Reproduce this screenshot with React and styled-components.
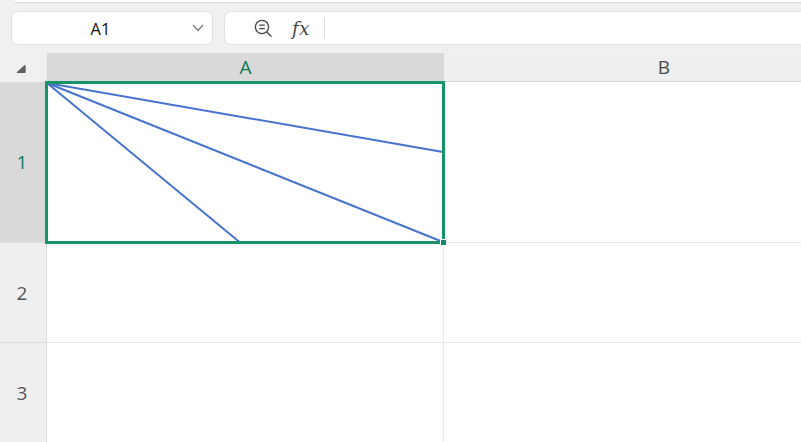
import React from 'react'
import styled, { createGlobalStyle } from 'styled-components'

const Global = createGlobalStyle`
  html, body { margin: 0; padding: 0; background: #eff1ef; overflow: hidden; }
  body { font-family: "Open Sans", "Noto Sans", sans-serif; }
`

const Page = styled.div`
  width: 801px;
  height: 442px;
  display: flex;
  flex-direction: column;
  overflow: hidden;
`

const TopSheet = styled.div`
  height: 2px;
  margin-left: 14px;
  background: #fff;
  border-bottom: 1px solid #d6d8d6;
  border-bottom-left-radius: 4px;
  flex: none;
`

const FormulaBar = styled.div`
  display: flex;
  gap: 11px;
  height: 34px;
  margin: 8px 0 8px 11px;
  flex: none;
`

const Box = styled.div`
  background: #fff;
  border: 1px solid #dfe1df;
  box-sizing: border-box;
  border-radius: 7px;
  display: flex;
  align-items: center;
`

const NameBox = styled(Box)`
  width: 202px;
  position: relative;
  justify-content: center;
  padding-right: 23px;
  font-size: 16.5px;
  color: #111;
`

const Chevron = styled.svg`
  position: absolute;
  right: 7px;
  top: 11px;
`

const InputBox = styled(Box)`
  flex: 1;
  border-right: none;
  border-top-right-radius: 0;
  border-bottom-right-radius: 0;
  padding-left: 29px;
`

const Fx = styled.span`
  font-family: "DejaVu Serif", "Liberation Serif", serif;
  font-style: italic;
  font-size: 18px;
  color: #444;
  margin-left: 19px;
  width: 25px;
  letter-spacing: 0.5px;
`

const Divider = styled.div`
  width: 1px;
  height: 20px;
  background: #dcdcdc;
  margin-left: 7px;
`

const Sheet = styled.div`
  position: relative;
  flex: 1;
  display: grid;
  grid-template-columns: 47px 397px 440px;
  grid-template-rows: 29px 161px 100px 100px;
  background: #fff;
`

const Corner = styled.div`
  background: #eff0ef;
  display: flex;
  align-items: center;
  justify-content: center;
  padding: 2px 5px 0 0;
`

const ColHead = styled.div`
  display: flex;
  align-items: center;
  justify-content: center;
  font-size: 19px;
  background: ${p => (p.$active ? '#d9d9d9' : '#efefef')};
  color: ${p => (p.$active ? '#0f7b5a' : '#4a4a4a')};
  border-bottom: 1px solid ${p => (p.$active ? '#d9d9d9' : '#d6d6d6')};
  box-sizing: border-box;
`

const RowHead = styled.div`
  display: flex;
  align-items: center;
  justify-content: center;
  padding-right: 2px;
  font-size: 19px;
  background: ${p => (p.$active ? '#d9d9d9' : '#efefef')};
  color: ${p => (p.$active ? '#0f7b5a' : '#555')};
  border-bottom: 1px solid #dedede;
  border-right: 1px solid #dedede;
  box-sizing: border-box;
`

const Cell = styled.div`
  background: #fff;
  border-right: 1px solid #e6e6e6;
  border-bottom: 1px solid #e6e6e6;
  box-sizing: border-box;
`

const Selection = styled.div`
  position: absolute;
  left: 45px;
  top: 28px;
  width: 400px;
  height: 163px;
  box-sizing: border-box;
  border: 3px solid #169467;
`

const Handle = styled.div`
  position: absolute;
  right: -4px;
  bottom: -4px;
  width: 5px;
  height: 5px;
  background: #14886a;
  border: 1px solid #fff;
  border-right: none;
  border-bottom: none;
`

const Diagonals = styled.svg`
  position: absolute;
  left: 0;
  top: 0;
  pointer-events: none;
`

const rows = [
  { n: 1, active: true },
  { n: 2 },
  { n: 3 },
]

// lines are in sheet coordinates, the sheet starts at y=53
const lines = [
  [443, 99],
  [443, 189],
  [240, 189.5],
]

export default function App() {
  return (
    <Page>
      <Global />
      <TopSheet />
      <FormulaBar>
        <NameBox>
          A1
          <Chevron width="14" height="10" viewBox="0 0 14 10" fill="none" stroke="#777" strokeWidth="1.2">
            <path d="M2 2 L7 7.5 L12 2" />
          </Chevron>
        </NameBox>
        <InputBox>
          <svg width="19" height="19" viewBox="0 0 19 19" fill="none" stroke="#444" strokeWidth="1.3">
            <circle cx="8" cy="8" r="6.6" />
            <path d="M5.2 6.2 H10.8 M5.2 9.6 H10.8 M12.8 13 L17.5 17.5" />
          </svg>
          <Fx>fx</Fx>
          <Divider />
        </InputBox>
      </FormulaBar>
      <Sheet>
        <Corner>
          <svg width="10" height="10" viewBox="0 0 10 10">
            <path d="M8.6 1 Q9.6 0.6 9.6 2 V8 Q9.6 9 8.6 9 H1.4 Q0.2 9 1 8 L7 2.4 Z" fill="#5f5f5f" />
          </svg>
        </Corner>
        <ColHead $active>A</ColHead>
        <ColHead>B</ColHead>
        {rows.map(r => (
          <React.Fragment key={r.n}>
            <RowHead $active={r.active}>{r.n}</RowHead>
            <Cell />
            <Cell />
          </React.Fragment>
        ))}
        <Diagonals width="801" height="389" viewBox="0 0 801 389" fill="none" stroke="#4773cf" strokeWidth="2">
          {lines.map(([x, y]) => (
            <line key={x + '-' + y} x1="47" y1="30" x2={x} y2={y} />
          ))}
        </Diagonals>
        <Selection>
          <Handle />
        </Selection>
      </Sheet>
    </Page>
  )
}
